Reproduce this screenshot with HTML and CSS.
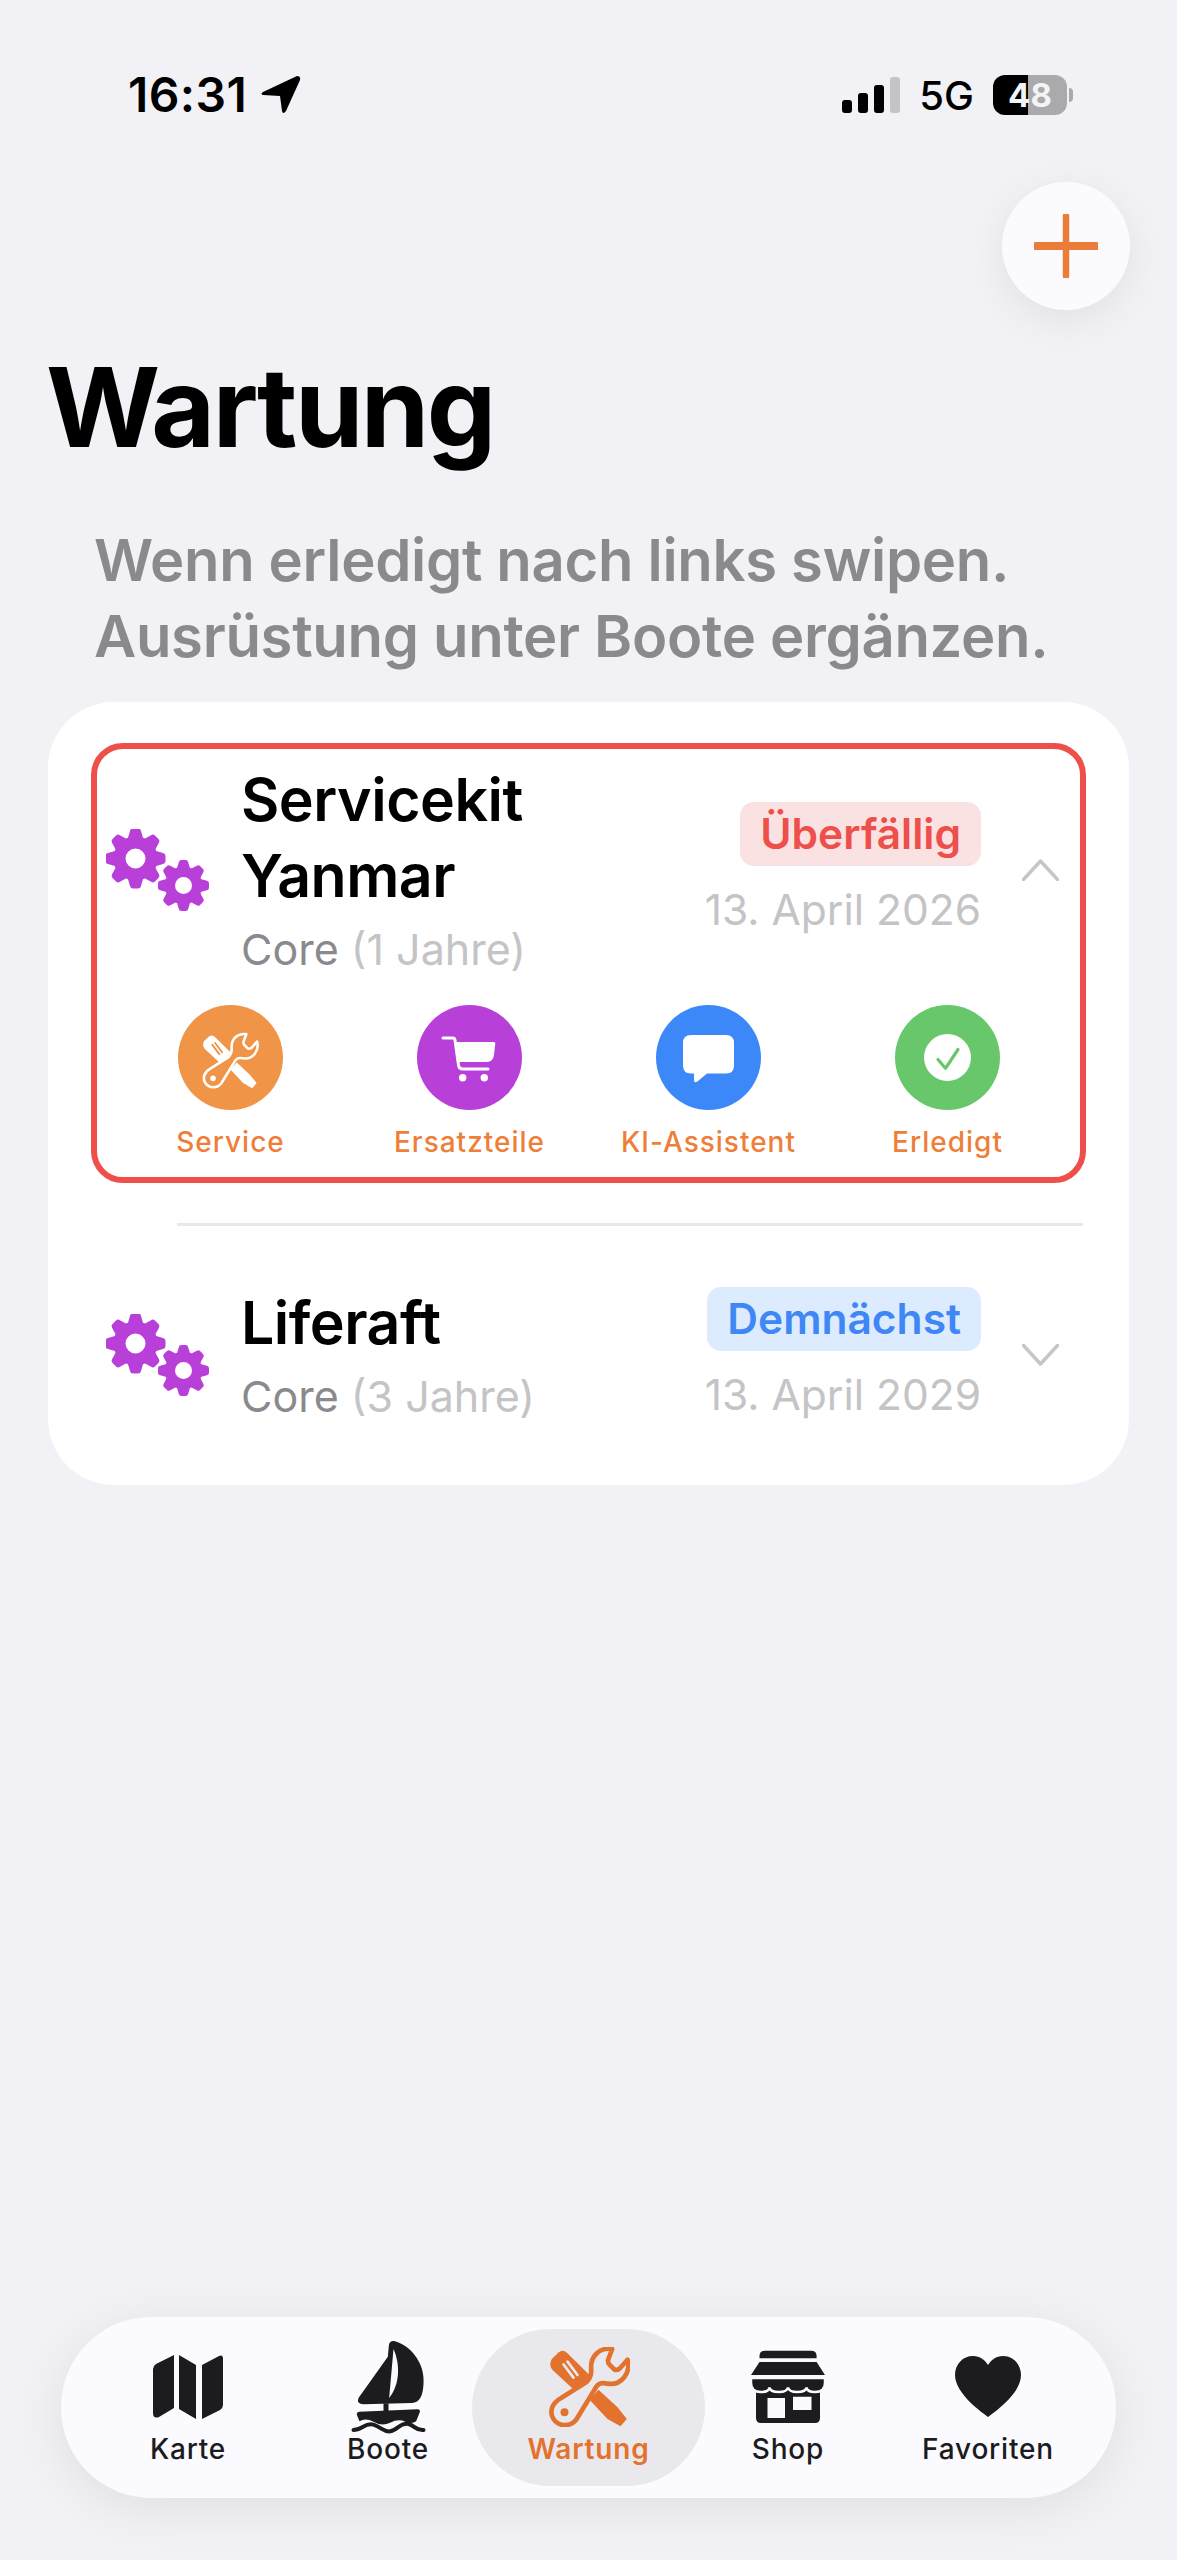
FILE: index.html
```html
<!DOCTYPE html>
<html lang="de">
<head>
<meta charset="utf-8">
<title>Wartung</title>
<link rel="stylesheet" href="styles.css">
</head>
<body>
<svg class="defs" width="0" height="0" aria-hidden="true">
  <defs>
    <g id="gear">
      <circle class="gear-ring" r="16"/>
      <path id="tooth" d="M-8 -19 L-5.5 -27.5 Q-5 -30 -2.5 -30 L2.5 -30 Q5 -30 5.5 -27.5 L8 -19 Z"/>
      <use href="#tooth" transform="rotate(45)"/>
      <use href="#tooth" transform="rotate(90)"/>
      <use href="#tooth" transform="rotate(135)"/>
      <use href="#tooth" transform="rotate(180)"/>
      <use href="#tooth" transform="rotate(225)"/>
      <use href="#tooth" transform="rotate(270)"/>
      <use href="#tooth" transform="rotate(315)"/>
    </g>
    <g id="gears">
      <use href="#gear" transform="translate(29.5 29.5)"/>
      <use href="#gear" transform="translate(77.5 56.5) scale(.85)"/>
    </g>
    <g id="tools">
      <path class="tool-fill" d="M57 58 L78 38 Q90 28 103 40 L172 108 L128 155 L60 92 Q46 76 57 58 Z"/>
      <path class="tool-cut" d="M92 74 L122 114 M104 66 L134 106"/>
      <path class="tool-fill" d="M197 150 L254 203 L282 238 L263 260 L224 238 L170 180 Z"/>
      <path class="tool-line" d="M238 28 C200 22 172 50 175 88 C176 105 172 118 160 128 L85 175 C58 190 48 215 62 238 C78 262 112 262 130 240 L185 150 C195 130 205 128 225 132 C265 138 295 100 284 60 L262 85 Q255 93 245 90 L230 75 Q222 65 228 55 Z"/>
      <circle class="tool-fill" cx="95" cy="218" r="12"/>
    </g>
  </defs>
</svg>

<div class="screen">
  <header class="status">
    <div class="status-left">
      <span class="time">16:31</span>
      <svg class="arrow" viewBox="0 0 40 38"><path d="M36 0 Q40 0 39 4 L25 35 Q22 39 21 35 L19 20 L2 19 Q-1 18 2 16 Z"/></svg>
    </div>
    <div class="status-right">
      <div class="signal"><i class="b1"></i><i class="b2"></i><i class="b3"></i><i class="b4"></i></div>
      <span class="net">5G</span>
      <div class="battery">48</div>
    </div>
  </header>

  <div class="add-row">
    <button class="add" type="button" aria-label="Hinzufügen">
      <svg viewBox="0 0 64 64" width="64" height="64"><path d="M32 2 V62" class="plus-v"/><path d="M2 32 H62" class="plus-h"/></svg>
    </button>
  </div>

  <h1 class="title">Wartung</h1>
  <p class="hint">Wenn erledigt nach links swipen.<br>Ausrüstung unter Boote ergänzen.</p>

  <section class="card">
    <article class="item item-open">
      <div class="row">
        <svg class="gears" viewBox="0 0 104 82"><use href="#gears"/></svg>
        <div class="row-text">
          <h2 class="name">Servicekit<br>Yanmar</h2>
          <p class="sub">Core <span class="years">(1 Jahre)</span></p>
        </div>
        <div class="row-status">
          <span class="badge badge-red">Überfällig</span>
          <span class="date">13. April 2026</span>
        </div>
        <svg class="chev" viewBox="0 0 37 22"><path d="M1.5 20.5 L18.5 2 L35.5 20.5"/></svg>
      </div>
      <div class="actions">
        <div class="action">
          <div class="disc disc-orange">
            <svg class="disc-icon tools-white" viewBox="0 0 105 105"><use href="#tools" transform="translate(12.9 22.6) scale(.233)"/></svg>
          </div>
          <span class="action-label">Service</span>
        </div>
        <div class="action">
          <div class="disc disc-purple">
            <svg class="disc-icon" viewBox="0 0 105 105">
              <path class="cart-line" d="M26 33 H36 Q37.5 33 38 35 L41.5 60 Q42 64 46 64 H71"/>
              <path class="white" d="M38 37 H77 Q78.5 37 78.3 38.5 L77 50 Q76 57 70 57 H41 Z"/>
              <circle class="white" cx="45.7" cy="72.7" r="3.7"/>
              <circle class="white" cx="67.3" cy="72.7" r="3.7"/>
            </svg>
          </div>
          <span class="action-label">Ersatzteile</span>
        </div>
        <div class="action">
          <div class="disc disc-blue">
            <svg class="disc-icon" viewBox="0 0 105 105">
              <path class="white" d="M35 30 H70 Q78 30 78 38 V60.5 Q78 68.5 70 68.5 H51 L42 76 Q38 79 38 75 V68.5 H35 Q27 68.5 27 60.5 V38 Q27 30 35 30 Z"/>
            </svg>
          </div>
          <span class="action-label">KI-Assistent</span>
        </div>
        <div class="action">
          <div class="disc disc-green">
            <svg class="disc-icon" viewBox="0 0 105 105">
              <circle class="white" cx="52.5" cy="52.5" r="23.5"/>
              <path class="check" d="M43 54.5 L50.5 63.3 L63 44.5"/>
            </svg>
          </div>
          <span class="action-label">Erledigt</span>
        </div>
      </div>
    </article>

    <div class="sep"></div>

    <article class="item">
      <div class="row">
        <svg class="gears" viewBox="0 0 104 82"><use href="#gears"/></svg>
        <div class="row-text">
          <h2 class="name">Liferaft</h2>
          <p class="sub">Core <span class="years">(3 Jahre)</span></p>
        </div>
        <div class="row-status">
          <span class="badge badge-blue">Demnächst</span>
          <span class="date">13. April 2029</span>
        </div>
        <svg class="chev" viewBox="0 0 37 22"><path d="M1.5 1.5 L18.5 20 L35.5 1.5"/></svg>
      </div>
    </article>
  </section>

  <nav class="tabbar">
    <a class="tab">
      <span class="tab-icon">
        <svg width="70" height="64" viewBox="0 0 70 64">
          <path d="M0 14 Q0 11 3 9 L21 0 V53 L6 62 Q0 64 0 58 Z"/>
          <path d="M26 0 L43 10 V64 L26 54 Z"/>
          <path d="M49 10 L66 1 Q70 -1 70 4 V50 Q70 53 67 55 L49 64 Z"/>
        </svg>
      </span>
      <span class="tab-label">Karte</span>
    </a>
    <a class="tab">
      <span class="tab-icon">
        <svg width="77" height="95" viewBox="30 15 230 285">
          <path d="M146 35 Q148 18 165 22 C220 40 255 95 250 150 C248 185 240 205 215 207 L70 211 Q48 210 55 192 L143 68 Z"/>
          <path class="boat-cut" d="M160 45 C180 90 180 150 147 192 Z"/>
          <rect x="130" y="208" width="15" height="26"/>
          <path d="M58 233 L232 226 Q241 226 239 234 L228 262 Q215 272 195 263 Q175 253 150 266 Q125 278 100 263 Q75 250 58 262 L50 242 Q49 234 58 233 Z"/>
          <path class="boat-wave" d="M40 288 C65 288 75 265 100 272 C125 280 130 295 150 292 C170 290 180 265 205 270 C225 275 225 290 250 288"/>
        </svg>
      </span>
      <span class="tab-label">Boote</span>
    </a>
    <a class="tab tab-active">
      <span class="tab-icon tools-orange">
        <svg width="82" height="80" viewBox="46 22 245 240"><use href="#tools"/></svg>
      </span>
      <span class="tab-label">Wartung</span>
    </a>
    <a class="tab">
      <span class="tab-icon">
        <svg width="74" height="74" viewBox="0 0 74 74">
          <path d="M8.5 8.3 V6 Q8.5 0.7 14 0.7 H60 Q65.6 0.7 65.6 6 V8.3 Z"/>
          <path d="M8.5 12 H65.6 L74 25 H0 Z"/>
          <path fill-rule="evenodd" d="M5 38 H69 V68 Q69 73 64 73 H10 Q5 73 5 68 Z M16.5 48 V68 H34 V48 Z M42 46.7 V60 H60.5 V46.7 Z"/>
          <path class="shop-awn" d="M0 28 H74 V33 Q74 42 64 42 Q56 42 55.5 37.5 Q55 42 46 42 Q38 42 37 37.5 Q36 42 28 42 Q19 42 18.5 37.5 Q18 42 10 42 Q0 42 0 33 Z"/>
        </svg>
      </span>
      <span class="tab-label">Shop</span>
    </a>
    <a class="tab">
      <span class="tab-icon">
        <svg width="66" height="61" viewBox="0 0 66 61">
          <path d="M33 61 C28 57 0 38 0 19 C0 8 8 0 18 0 C25 0 30 4 33 9 C36 4 41 0 48 0 C58 0 66 8 66 19 C66 38 38 57 33 61 Z"/>
        </svg>
      </span>
      <span class="tab-label">Favoriten</span>
    </a>
  </nav>
</div>
</body>
</html>
```
FILE: styles.css
```css
* { box-sizing: border-box; }
html, body { margin: 0; padding: 0; }
body {
  background: #f1f1f6;
  font-family: Inter, "Noto Sans", sans-serif;
  color: #000;
}
.defs { display: block; width: 0; height: 0; }
.screen {
  height: 2560px;
  overflow: hidden;
  display: flex;
  flex-direction: column;
}

/* Status bar */
.status {
  display: flex;
  justify-content: space-between;
  align-items: center;
  height: 50px;
  margin-top: 70px;
  padding: 0 103px 0 128px;
}
.status-left { display: flex; align-items: center; gap: 14px; }
.time { font-size: 48px; font-weight: 600; line-height: 50px; letter-spacing: .4px; }
.arrow { width: 40px; height: 38px; fill: #000; }
.status-right { display: flex; align-items: center; }
.signal { display: flex; align-items: flex-end; gap: 6px; height: 36px; }
.signal i { display: block; width: 10px; background: #000; border-radius: 3px; }
.signal .b1 { height: 13px; }
.signal .b2 { height: 20px; }
.signal .b3 { height: 28px; }
.signal .b4 { height: 36px; background: #c4c4c8; }
.net { font-size: 40px; font-weight: 500; line-height: 50px; margin: 2px 19px 0; }
.battery {
  position: relative;
  width: 74px;
  height: 40px;
  border-radius: 12px;
  background: linear-gradient(to right, #000 47%, #aaaaac 47%);
  color: #f4f4f6;
  font-size: 33px;
  font-weight: 700;
  line-height: 40px;
  text-align: center;
  margin-right: 7px;
}
.battery::after {
  content: "";
  position: absolute;
  left: 76px;
  top: 13px;
  width: 4px;
  height: 14px;
  border-radius: 0 7px 7px 0;
  background: #aaaaac;
}

/* Add button */
.add-row { display: flex; justify-content: flex-end; padding: 62px 47px 0 0; }
.add {
  width: 128px;
  height: 128px;
  border: 0;
  padding: 0;
  border-radius: 50%;
  background: #fbfbfe;
  box-shadow: 0 10px 40px rgba(0, 0, 0, .07);
  display: flex;
  align-items: center;
  justify-content: center;
}
.add svg { fill: none; stroke: #ea7d3a; stroke-linecap: round; }
.plus-v { stroke-width: 6.5px; }
.plus-h { stroke-width: 8px; }

/* Heading */
.title {
  margin: 37px 0 0;
  padding-left: 46px;
  font-size: 110px;
  font-weight: 700;
  line-height: 120px;
  letter-spacing: -2.5px;
}
.hint {
  margin: 55px 0 0;
  padding-left: 94px;
  font-size: 58px;
  font-weight: 600;
  line-height: 76px;
  letter-spacing: -.3px;
  color: #8a8a8e;
}

/* List card */
.card {
  margin: 28px 48px 0;
  padding: 41px 43px 55px;
  background: #fff;
  border-radius: 66px;
}
.item { border: 6px solid transparent; border-radius: 32px; }
.item-open { border-color: #ee4f4b; padding-bottom: 18px; }
.row {
  display: flex;
  align-items: center;
  padding: 13px 21px 0 9px;
}
.gears { width: 104px; height: 82px; fill: #b93fd9; flex: none; margin-right: 31px; }
.gear-ring { fill: none; stroke: #b93fd9; stroke-width: 12px; }
.row-text { flex: 1; min-width: 0; }
.name { margin: 0; font-size: 59px; font-weight: 600; line-height: 76px; letter-spacing: -.5px; }
.sub { margin: 7px 0 0; font-size: 43px; line-height: 56px; color: #8a8a8e; }
.years { color: #c4c4c6; }
.row-status { display: flex; flex-direction: column; align-items: flex-end; gap: 16px; flex: none; margin-right: 41px; }
.badge {
  height: 64px;
  padding: 0 20px;
  border-radius: 14px;
  font-size: 42.5px;
  font-weight: 600;
  line-height: 64px;
}
.badge-red { background: #fae2e2; color: #ee4f4b; }
.badge-blue { background: #dcebfd; color: #3f87f5; }
.date { font-size: 42.5px; line-height: 56px; color: #c4c4c6; }
.chev { width: 37px; height: 22px; flex: none; fill: none; stroke: #c6c6c8; stroke-width: 3.5px; stroke-linecap: round; stroke-linejoin: round; }

/* Actions */
.actions {
  display: grid;
  grid-template-columns: repeat(4, 239px);
  margin-top: 28px;
  padding-left: 14px;
}
.action { display: flex; flex-direction: column; align-items: center; }
.disc { width: 105px; height: 105px; border-radius: 50%; }
.disc-orange { background: #f09547; }
.disc-purple { background: #b93fd9; }
.disc-blue { background: #3d88f8; }
.disc-green { background: #67c76a; }
.disc-icon { display: block; width: 105px; height: 105px; }
.white { fill: #fff; }
.cart-line { fill: none; stroke: #fff; stroke-width: 3px; stroke-linecap: round; stroke-linejoin: round; }
.check { fill: none; stroke: #67c76a; stroke-width: 3.2px; stroke-linecap: round; stroke-linejoin: round; }
.action-label { margin-top: 15px; font-size: 28px; font-weight: 500; line-height: 34px; letter-spacing: 1px; color: #ee7f3a; white-space: nowrap; }

.sep { height: 3px; margin: 40px 3px 0 86px; background: #e8e8ea; }
.card > .item:last-child { margin-top: 40px; }

/* Tool icon, used twice on different grounds */
.tool-fill { fill: var(--tool); }
.tool-cut { fill: none; stroke: var(--cut); stroke-width: 8px; stroke-linecap: round; }
.tool-line { fill: var(--cut); stroke: var(--tool); stroke-width: var(--tool-w); stroke-linejoin: round; }
.tools-white { --tool: #fff; --cut: #f09547; --tool-w: 11px; }
.tools-orange { --tool: #e2722e; --cut: #e9e9ed; --tool-w: 14px; }

/* Tab bar */
.tabbar {
  display: grid;
  grid-template-columns: repeat(5, 200px);
  height: 181px;
  margin: auto 61px 62px;
  padding: 12px 0 0 27px;
  border-radius: 90px;
  background: #fbfbff;
  box-shadow: 0 10px 50px rgba(0, 0, 0, .08);
}
.tab {
  display: flex;
  flex-direction: column;
  align-items: center;
  height: 157px;
  padding-top: 12px;
  color: #1c1c20;
}
.tab-active { margin: 0 -17px 0 -16px; border-radius: 79px; background: #e9e9ed; color: #e2722e; }
.tab-icon { display: flex; align-items: center; justify-content: center; height: 91px; fill: #1c1c20; }
.tab-label { font-size: 28px; font-weight: 500; line-height: 34px; letter-spacing: .8px; white-space: nowrap; }
.tab-active .tab-label { font-weight: 600; }
.boat-cut { fill: #fbfbff; }
.boat-wave { fill: none; stroke: #1c1c20; stroke-width: 12px; stroke-linecap: round; }
.shop-awn { stroke: #fbfbff; stroke-width: 2.5px; }
```
